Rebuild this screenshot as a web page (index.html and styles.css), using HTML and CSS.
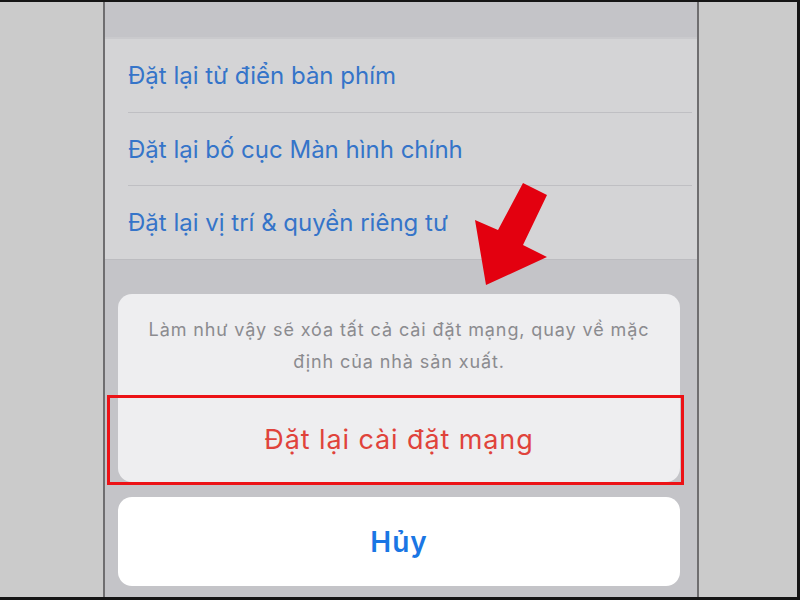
FILE: index.html
```html
<!DOCTYPE html>
<html lang="vi">
<head>
<meta charset="utf-8">
<title>Đặt lại cài đặt mạng</title>
<link rel="stylesheet" href="styles.css">
</head>
<body>
<div class="frame">
  <div class="gutter"></div>
  <div class="phone">
    <div class="dim-top"></div>
    <ul class="list">
      <li class="row">Đặt lại từ điển bàn phím</li>
      <li class="row">Đặt lại bố cục Màn hình chính</li>
      <li class="row">Đặt lại vị trí &amp; quyền riêng tư</li>
    </ul>
    <div class="dim-gap"></div>
    <div class="sheet">
      <p class="message">Làm như vậy sẽ xóa tất cả cài đặt mạng, quay về mặc<br>định của nhà sản xuất.</p>
      <div class="action destructive">Đặt lại cài đặt mạng</div>
    </div>
    <div class="cancel">Hủy</div>
  </div>
  <div class="gutter"></div>

  <div class="highlight"></div>
  <svg class="arrow" viewBox="0 0 800 600" width="800" height="600" aria-hidden="true">
    <polygon points="523,183 547,195 523,245 547,257 486,285 475,220 498,230" fill="#e3000f"/>
  </svg>
</div>
</body>
</html>
```

FILE: styles.css
```css
html, body {
  margin: 0;
  padding: 0;
}

body {
  width: 800px;
  height: 600px;
  overflow: hidden;
  font-family: "Inter", "Noto Sans", "Liberation Sans", sans-serif;
}

.frame {
  position: relative;
  width: 800px;
  height: 600px;
  box-sizing: border-box;
  border-top: 2px solid #151515;
  border-right: 3px solid #151515;
  border-bottom: 3px solid #151515;
  background: #cbcbcb;
  display: flex;
}

.gutter {
  flex: 1;
}

.frame > .gutter:first-child {
  flex: 0 0 103px;
}

.phone {
  flex: 0 0 592px;
  border-left: 2px solid #6f6e70;
  border-right: 2px solid #6f6e70;
  background: #c4c4c8;
  display: flex;
  flex-direction: column;
}

.dim-top {
  height: 35px;
  border-bottom: 2px solid #cacacd;
}

.list {
  list-style: none;
  margin: 0;
  padding: 0 5px 0 0;
  height: 220px;
  background: #d4d4d6;
  display: flex;
  flex-direction: column;
}

.row {
  flex: 1;
  display: flex;
  align-items: center;
  margin-left: 23px;
  font-size: 24px;
  color: #3574c9;
}

.row + .row {
  border-top: 1px solid #bfbfc3;
}

.dim-gap {
  height: 35px;
  border-top: 1px solid #bcbcc0;
  box-sizing: border-box;
}

.sheet {
  margin: 0 17px 0 13px;
  height: 188px;
  background: #eeeef0;
  border-radius: 14px;
  display: flex;
  flex-direction: column;
}

.message {
  margin: 0;
  padding: 20px 10px 18px;
  height: 64px;
  font-size: 18px;
  letter-spacing: 0.9px;
  line-height: 32px;
  color: #8b8b8f;
  text-align: center;
  white-space: nowrap;
  border-bottom: 1px solid #d8d8dc;
}

.action {
  flex: 1;
  display: flex;
  align-items: center;
  justify-content: center;
  font-size: 27px;
  letter-spacing: 0.9px;
}

.destructive {
  color: #e0433b;
}

.cancel {
  margin: 15px 17px 0 13px;
  height: 89px;
  background: #ffffff;
  border-radius: 14px;
  display: flex;
  align-items: center;
  justify-content: center;
  font-size: 28px;
  letter-spacing: 1px;
  font-weight: 600;
  color: #1a76e4;
}

.highlight {
  position: absolute;
  left: 107px;
  top: 393px;
  width: 577px;
  height: 90px;
  box-sizing: border-box;
  border: 3px solid #ec1216;
}

.arrow {
  position: absolute;
  left: 0;
  top: -2px;
}
```
